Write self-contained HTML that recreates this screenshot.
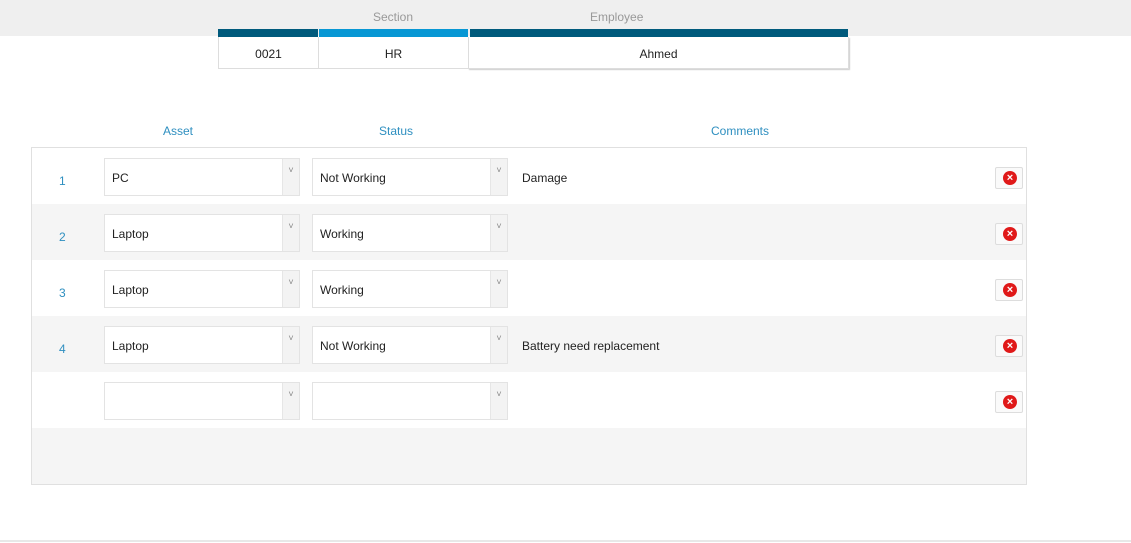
<!DOCTYPE html><html><head><style>
body{margin:0;width:1131px;height:543px;background:#fff;font-family:"Liberation Sans",sans-serif;font-size:12px;color:#222;position:relative;overflow:hidden}
.a{position:absolute}
.top{left:0;top:0;width:1131px;height:36px;background:#efefef}
.lbl{color:#999;font-size:12px;top:10px}
.bar{top:29px;height:8px}
.cell{top:37px;height:32px;line-height:35px;text-align:center;border:1px solid #ddd;border-top:none;box-sizing:border-box;background:#fff;font-size:12px}
.hd{top:124px;color:#2e8fc0;font-size:12px}
.panel{left:31px;top:147px;width:996px;height:338px;border:1px solid #e0e0e0;box-sizing:border-box;background:#f5f5f5}
.row{left:32px;width:994px;height:56px}
.sel{height:38px;border:1px solid #e3e3e3;box-sizing:border-box;background:#fff;width:196px;line-height:39px;padding-left:7px}
.sel i{position:absolute;right:0;top:0;width:16px;height:36px;background:#f3f3f3;border-left:1px solid #e6e6e6;font-style:normal;color:#888;font-size:9px;line-height:22px;text-align:center}
.num{color:#2e8fc0;left:59px}
.btn{left:995px;width:28px;height:22px;border:1px solid #ddd;border-radius:2px;box-sizing:border-box;background:#fafafa}
.btn b{position:absolute;left:7px;top:3px;width:14px;height:14px;border-radius:50%;background:#e01919;color:#fff;font-size:11px;line-height:14px;text-align:center;font-weight:bold}
</style></head><body>
<div class="a top"></div>
<div class="a lbl" style="left:373px">Section</div>
<div class="a lbl" style="left:590px">Employee</div>
<div class="a bar" style="left:218px;width:100px;background:#005a7c"></div>
<div class="a bar" style="left:319px;width:149px;background:#0797d4"></div>
<div class="a bar" style="left:470px;width:378px;background:#005a7c"></div>
<div class="a cell" style="left:218px;width:101px">0021</div>
<div class="a cell" style="left:318px;width:151px">HR</div>
<div class="a cell" style="left:468px;width:381px;box-shadow:1px 1px 1px #ccc">Ahmed</div>
<div class="a hd" style="left:163px">Asset</div>
<div class="a hd" style="left:379px">Status</div>
<div class="a hd" style="left:711px">Comments</div>
<div class="a panel"></div>
<div class="a row" style="top:148px;background:#fff"></div>
<div class="a row" style="top:260px;background:#fff"></div>
<div class="a row" style="top:372px;background:#fff"></div>

<div class="a num" style="top:174px">1</div>
<div class="a sel" style="left:104px;top:158px">PC<i>˅</i></div>
<div class="a sel" style="left:312px;top:158px">Not Working<i>˅</i></div>
<div class="a" style="left:522px;top:171px">Damage</div>
<div class="a btn" style="top:167px"><b>×</b></div>

<div class="a num" style="top:230px">2</div>
<div class="a sel" style="left:104px;top:214px">Laptop<i>˅</i></div>
<div class="a sel" style="left:312px;top:214px">Working<i>˅</i></div>
<div class="a btn" style="top:223px"><b>×</b></div>

<div class="a num" style="top:286px">3</div>
<div class="a sel" style="left:104px;top:270px">Laptop<i>˅</i></div>
<div class="a sel" style="left:312px;top:270px">Working<i>˅</i></div>
<div class="a btn" style="top:279px"><b>×</b></div>

<div class="a num" style="top:342px">4</div>
<div class="a sel" style="left:104px;top:326px">Laptop<i>˅</i></div>
<div class="a sel" style="left:312px;top:326px">Not Working<i>˅</i></div>
<div class="a" style="left:522px;top:339px">Battery need replacement</div>
<div class="a btn" style="top:335px"><b>×</b></div>

<div class="a sel" style="left:104px;top:382px"><i>˅</i></div>
<div class="a sel" style="left:312px;top:382px"><i>˅</i></div>
<div class="a btn" style="top:391px"><b>×</b></div>

<div class="a" style="left:0;top:540px;width:1131px;height:2px;background:#e8e8e8"></div>
</body></html>
